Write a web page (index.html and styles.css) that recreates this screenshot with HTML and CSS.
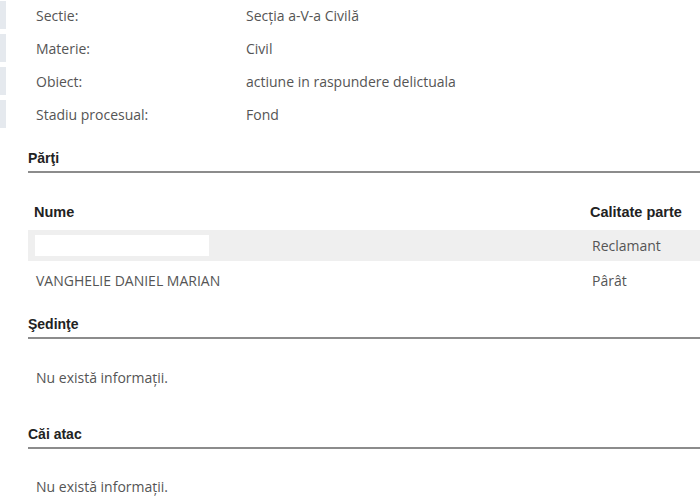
FILE: index.html
```html
<!DOCTYPE html>
<html lang="ro">
<head>
<meta charset="utf-8">
<title>Dosar</title>
<link rel="stylesheet" href="styles.css">
</head>
<body>
<div class="page">
  <div class="info">
    <div class="row"><span class="tab"></span><span class="lbl">Sectie:</span><span class="val">Secţia a-V-a Civilă</span></div>
    <div class="row"><span class="tab"></span><span class="lbl">Materie:</span><span class="val">Civil</span></div>
    <div class="row"><span class="tab"></span><span class="lbl">Obiect:</span><span class="val">actiune in raspundere delictuala</span></div>
    <div class="row"><span class="tab"></span><span class="lbl">Stadiu procesual:</span><span class="val">Fond</span></div>
  </div>

  <section class="sec sec-parti">
    <h2 class="sec-title">Părţi</h2>
    <div class="parti">
      <div class="p-head"><span class="c-name">Nume</span><span class="c-cal">Calitate parte</span></div>
      <div class="p-row p-row-grey"><span class="c-name"><span class="redact"></span></span><span class="c-cal">Reclamant</span></div>
      <div class="p-row p-row-2"><span class="c-name">VANGHELIE DANIEL MARIAN</span><span class="c-cal">Pârât</span></div>
    </div>
  </section>

  <section class="sec sec-sedinte">
    <h2 class="sec-title">Şedinţe</h2>
    <p class="empty">Nu există informaţii.</p>
  </section>

  <section class="sec sec-cai">
    <h2 class="sec-title">Căi atac</h2>
    <p class="empty empty-last">Nu există informaţii.</p>
  </section>
</div>
</body>
</html>
```
FILE: styles.css
```css
html, body {
  margin: 0;
  padding: 0;
  background: #ffffff;
  overflow: hidden;
}
body {
  font-family: "Open Sans", "Noto Sans", sans-serif;
  font-size: 14px;
  color: #555555;
}
.page {
  width: 700px;
}
.info {
  margin-top: -1px;
}
.row {
  display: grid;
  grid-template-columns: 6px 240px 1fr;
  height: 33px;
  align-items: center;
}
.tab {
  align-self: stretch;
  background: #e5e9ee;
  margin: 2px 0 3px;
}
.lbl {
  padding-left: 30px;
  line-height: 18px;
  white-space: nowrap;
}
.val {
  line-height: 18px;
  white-space: nowrap;
}
.sec {
  margin-left: 28px;
}
.sec-title {
  margin: 0;
  font-family: "Liberation Sans", Arial, sans-serif;
  font-size: 14px;
  font-weight: bold;
  color: #222222;
  line-height: 16px;
  padding-bottom: 5px;
  border-bottom: 2px solid #8c8c8c;
}
.sec-parti {
  margin-top: 19px;
}
.parti {
  margin-top: 23px;
}
.p-head {
  display: grid;
  grid-template-columns: 556px 1fr;
  font-family: "Liberation Sans", Arial, sans-serif;
  font-size: 14.5px;
  font-weight: bold;
  color: #222222;
  line-height: 16px;
  padding: 8px 0 10px;
}
.p-head span {
  padding-left: 6px;
  white-space: nowrap;
}
.p-row {
  display: grid;
  grid-template-columns: 556px 1fr;
  align-items: center;
  height: 31px;
}
.p-row .c-name, .p-row .c-cal {
  padding-left: 8px;
  white-space: nowrap;
}
.p-row-grey {
  background: #efefef;
}
.p-row-2 {
  height: 38px;
}
.redact {
  display: block;
  width: 174px;
  height: 21px;
  margin-left: -1px;
  background: #ffffff;
}
.sec-sedinte {
  margin-top: 17px;
}
.empty {
  margin: 0;
  padding: 30px 0 0 8px;
  line-height: 18px;
}
.empty-last {
  padding-top: 29px;
}
.sec-cai {
  margin-top: 39px;
}
```
